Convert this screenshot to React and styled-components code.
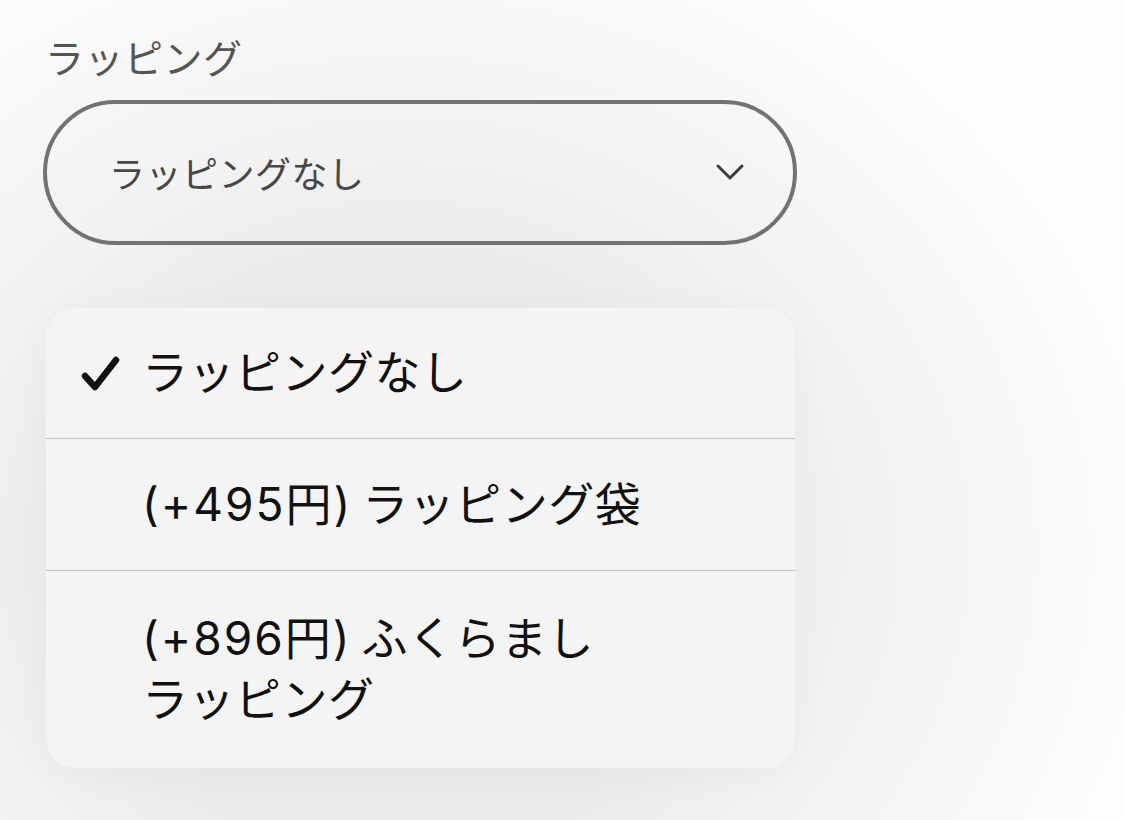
import React, { useState } from 'react'
import styled, { createGlobalStyle } from 'styled-components'

const GlobalStyle = createGlobalStyle`
  html, body { margin: 0; padding: 0; background: #ffffff; }
  body {
    font-family: Inter, "Noto Sans CJK JP", "Noto Sans", sans-serif;
    overflow: hidden;
    width: 1125px; height: 820px;
  }
`

const Page = styled.div`
  width: 1125px; height: 820px;
  padding: 33px 0 0 43px;
  box-sizing: border-box;
  display: flex; flex-direction: column; align-items: flex-start;
  background: radial-gradient(ellipse 760px 660px at 400px 550px,
    #e8e8e8 0%, #ebebeb 45%, #f2f2f2 62%, #f8f8f8 85%, #fdfdfd 100%);
`
const Label = styled.div`
  font-family: "Noto Sans CJK JP", sans-serif;
  font-size: 39px; line-height: 1.2; color: #555;
  margin-left: 2px; margin-bottom: 20px;
  letter-spacing: 0.5px;
`
const Pill = styled.div`
  width: 754px; height: 145px;
  box-sizing: border-box;
  border: 4px solid #727272;
  border-radius: 80px;
  display: flex; align-items: center; justify-content: space-between;
  padding: 0 48px 0 62px;
  color: #474747; font-size: 36px;
  font-family: "Noto Sans CJK JP", sans-serif;
  letter-spacing: 0.5px;
`
const Menu = styled.ul`
  list-style: none; margin: 63px 0 0 3px; padding: 0;
  width: 749px;
  background: #f4f4f4;
  border-radius: 30px;
  overflow: hidden;
  box-shadow: 0 6px 40px rgba(0,0,0,0.03);
`
const Row = styled.li`
  display: grid;
  grid-template-columns: 96px 1fr;
  align-items: center;
  min-height: ${p => p.$h}px;
  box-sizing: border-box;
  background: ${p => p.$selected ? '#f5f3f3' : '#f4f4f4'};
  border-bottom: ${p => p.$last ? 'none' : '1px solid #c4c3c4'};
  font-size: 46px; line-height: 61px; color: #111;
  letter-spacing: 0.5px;
`
const Price = styled.span`
  letter-spacing: 2px;
  margin-right: 10px;
`
const Check = styled.span`
  display: flex; justify-content: flex-end; padding-right: 21px;
`

const options = [
  { id: 0, label: 'ラッピングなし', h: 131 },
  { id: 1, label: <><Price>(+495円)</Price>ラッピング袋</>, h: 132 },
  { id: 2, label: <><Price>(+896円)</Price>ふくらまし<br />ラッピング</>, h: 197 },
]

export default function App() {
  const [selected, setSelected] = useState(0)
  return (
    <>
      <GlobalStyle />
      <Page>
        <Label>ラッピング</Label>
        <Pill>
          <span>ラッピングなし</span>
          <svg width="30" height="18" viewBox="0 0 30 18">
            <polyline points="3,3 15,15 27,3" fill="none" stroke="#3c3c3c" strokeWidth="3" strokeLinecap="round" strokeLinejoin="round" />
          </svg>
        </Pill>
        <Menu>
          {options.map((o, i) => (
            <Row key={o.id} $h={o.h} $selected={selected === o.id} $last={i === options.length - 1} onClick={() => setSelected(o.id)}>
              <Check>
                {selected === o.id && (
                  <svg width="40" height="36" viewBox="0 0 40 36">
                    <polyline points="4,21 14,32 35,5" fill="none" stroke="#111" strokeWidth="6.5" strokeLinecap="round" strokeLinejoin="round" />
                  </svg>
                )}
              </Check>
              <span>{o.label}</span>
            </Row>
          ))}
        </Menu>
      </Page>
    </>
  )
}
